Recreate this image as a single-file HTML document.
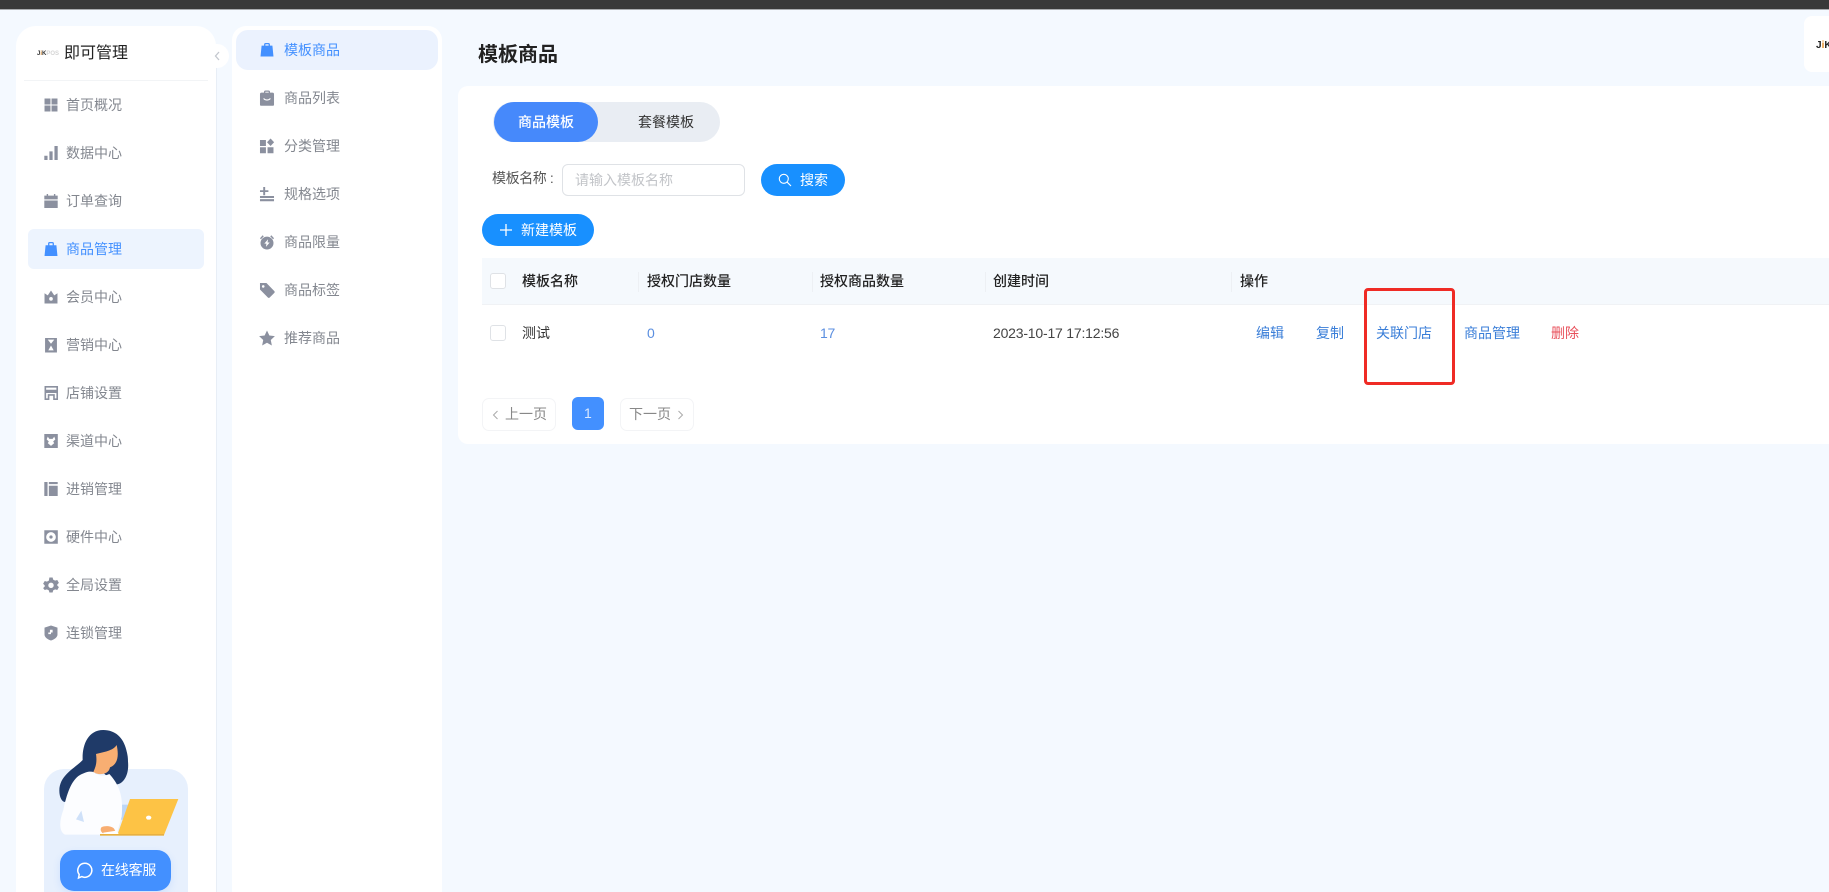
<!DOCTYPE html>
<html lang="zh-CN">
<head>
<meta charset="utf-8">
<title>模板商品</title>
<style>
*{box-sizing:border-box;margin:0;padding:0}
html,body{width:1829px;height:892px;overflow:hidden;background:#f4f9ff;font-family:"Liberation Sans","Noto Sans CJK SC",sans-serif;font-size:14px;color:#333}
.a{position:absolute}
.t{position:absolute;line-height:20px;height:20px;white-space:nowrap}
.m{color:#83878f}
.act{color:#4390ff}
.i{position:absolute;width:16px;height:16px;fill:#8b909f;transform:scale(1.08)}
.hd{font-weight:500;color:#222}
.sep{position:absolute;width:1px;height:20px;top:272px;background:#edf0f4}
.lk{color:#3a7ed8}
.btn{position:absolute;background:#1890ff;border-radius:17px}
.pg{position:absolute;top:398px;height:33px;width:74px;border:1px solid #f3f4f6;border-radius:7px;background:#fff}
.cb{position:absolute;width:16px;height:16px;border:1px solid #dfe2e6;border-radius:3px;background:#fff}
</style>
</head>
<body>
<!-- top bar -->
<div class="a" style="left:0;top:0;width:1829px;height:9px;background:#393939"></div>
<div class="a" style="left:0;top:9px;width:1829px;height:1px;background:#a9abae"></div>

<!-- primary sidebar -->
<div class="a" style="left:16px;top:26px;width:200px;height:866px;background:#fff;border-radius:20px 20px 0 0"></div>
<div class="a" style="left:216px;top:60px;width:1px;height:832px;background:#e8eef6"></div>
<div class="a" style="left:24px;top:80px;width:184px;height:1px;background:#f2f4f6"></div>
<div class="t" style="left:37px;top:47px;width:22px;font-size:6px;font-weight:700;line-height:14px;height:14px;color:#333">J<span style="color:#c9822e">i</span>K<span style="color:#d5d5d5">POS</span></div>
<div class="t" style="left:64px;top:43px;font-size:16px;line-height:22px;height:22px;color:#222">即可管理</div>
<div class="a" style="left:205px;top:44px;width:24px;height:24px;border-radius:50%;background:#fff"></div>
<svg class="a" style="left:212px;top:50px" width="10" height="12" viewBox="0 0 10 12"><path d="M7 2L3.500 6 7 10" fill="none" stroke="#c3c7ce" stroke-width="1.300"/></svg>

<div class="a" style="left:28px;top:229px;width:176px;height:40px;background:#edf4fe;border-radius:6px"></div>

<svg class="i" style="left:43px;top:97px" viewBox="0 0 16 16"><path d="M2 2h5.500v5.500H2zM8.500 2H14v5.500H8.500zM2 8.500h5.500V14H2zM8.500 8.500H14V14H8.500z"/></svg>
<div class="t m" style="left:66px;top:95px">首页概况</div>
<svg class="i" style="left:43px;top:145px" viewBox="0 0 16 16"><path d="M1.800 10.500h3v4h-3zM6.500 6.500h3v8h-3zM11.200 1.500h3v13h-3z"/></svg>
<div class="t m" style="left:66px;top:143px">数据中心</div>
<svg class="i" style="left:43px;top:193px" viewBox="0 0 16 16"><path d="M4 1.500h1.300V3h5.400V1.500H12V3h2.200v3.500H1.800V3H4zM1.800 7.500h12.400v7H1.800z"/></svg>
<div class="t m" style="left:66px;top:191px">订单查询</div>
<svg class="i" style="left:43px;top:241px;fill:#4390ff" viewBox="0 0 16 16"><path d="M5.300 4.500V3a1.500 1.500 0 011.500-1.500h2.400A1.500 1.500 0 0110.700 3v1.500H13l1 10H2L3 4.500zM6.500 4.500h3V3a.3.3 0 00-.3-.3H6.800a.3.3 0 00-.3.3z"/></svg>
<div class="t act" style="left:66px;top:239px">商品管理</div>
<svg class="i" style="left:43px;top:289px" viewBox="0 0 16 16"><path fill-rule="evenodd" d="M2 4.500l3 2L8 2l3 4.500 3-2V14H2zM8 8a1.700 1.700 0 100 3.400A1.700 1.700 0 008 8z"/></svg>
<div class="t m" style="left:66px;top:287px">会员中心</div>
<svg class="i" style="left:43px;top:337px" viewBox="0 0 16 16"><path fill-rule="evenodd" d="M2.500 1.500h11v13.500h-11zM5 3l3 3.800L11 3zM8 8.500L5.500 13h5z"/></svg>
<div class="t m" style="left:66px;top:335px">营销中心</div>
<svg class="i" style="left:43px;top:385px" viewBox="0 0 16 16"><path fill-rule="evenodd" d="M2 1.500h12.500v13H10v-4H6.500v4H2zM3.500 3v2h9.500V3zM3.500 8v5h1.500V9h6.500v4H13V8z"/></svg>
<div class="t m" style="left:66px;top:383px">店铺设置</div>
<svg class="i" style="left:43px;top:433px" viewBox="0 0 16 16"><path fill-rule="evenodd" d="M1.800 1.500h12.500v13H1.800zM5 4L4 6.500 6 8.500 5 10l3 2.500 3-2.500-1-1.500 2-2L11 4 9.500 6h-3z"/></svg>
<div class="t m" style="left:66px;top:431px">渠道中心</div>
<svg class="i" style="left:43px;top:481px" viewBox="0 0 16 16"><path d="M1.800 1.500h3v13h-3zM6 1.500h8.200v2H6zM6 5h8.200v9.500H6z"/></svg>
<div class="t m" style="left:66px;top:479px">进销管理</div>
<svg class="i" style="left:43px;top:529px" viewBox="0 0 16 16"><path fill-rule="evenodd" d="M1.800 1.700h12.500v12.600H1.800zM8 3.500a4.500 4.500 0 100 9 4.500 4.500 0 000-9zM8 6.500a1.500 1.500 0 110 3 1.500 1.500 0 010-3z"/></svg>
<div class="t m" style="left:66px;top:527px">硬件中心</div>
<svg class="i" style="left:43px;top:577px" viewBox="0 0 16 16"><path fill-rule="evenodd" d="M6.500 1h3l.5 2 1.800 1 2-.6 1.500 2.600-1.500 1.500v1l1.500 1.500-1.500 2.600-2-.6-1.800 1-.5 2h-3l-.5-2-1.800-1-2 .6L.7 10.900l1.500-1.500v-1L.7 6.900 2.200 4.300l2 .6L6 3.900zM8 5.800a2.500 2.500 0 100 5 2.500 2.500 0 000-5z"/></svg>
<div class="t m" style="left:66px;top:575px">全局设置</div>
<svg class="i" style="left:43px;top:625px" viewBox="0 0 16 16"><path fill-rule="evenodd" d="M8 1l6 2v6.500c0 2.500-3 4.500-6 5.500-3-1-6-3-6-5.500V3zM7 5v2.500H5.500V9H8V7.500h1.500V5z"/></svg>
<div class="t m" style="left:66px;top:623px">连锁管理</div>

<!-- illustration -->
<div class="a" style="left:44px;top:769px;width:144px;height:123px;background:#e7f0fd;border-radius:20px 20px 0 0"></div>
<svg class="a" style="left:0;top:660px" width="300" height="232" viewBox="0 0 900 696">
<path d="M310 210C262 210 246 258 248 300C225 325 178 345 178 392C178 412 186 426 195 426L300 330L350 373C370 372 388 345 384 305C384 290 382 282 379 270C370 232 345 210 310 210Z" fill="#1f3a68"/>
<path d="M288 282C312 276 340 272 350 255C356 282 356 312 330 322C326 346 292 346 280 336C286 322 292 310 288 282Z" fill="#f8ae72"/>
<rect x="345" y="434" width="40" height="45" fill="#bcd6f7"/>
<path d="M240 345C268 330 280 334 290 342C304 350 318 347 328 342C352 368 372 402 365 470L350 524L195 524C176 514 178 482 190 450C200 402 214 360 240 345Z" fill="#fcfdff"/>
<path d="M228 478L244 452L252 486Z" fill="#cfe1f9"/>
<path d="M390 417L535 417L492 525L352 525Z" fill="#fdc345"/>
<rect x="300" y="522" width="192" height="5" fill="#e8b040"/>
<path d="M304 502C315 496 335 498 342 506L350 520L310 520C302 516 300 508 304 502Z" fill="#f8ae72"/>
<path d="M310 518L350 512L356 522L310 522Z" fill="#fff"/>
<ellipse cx="446" cy="473" rx="8" ry="6" fill="#fff"/>
</svg>
<div class="a" style="left:60px;top:850px;width:111px;height:41px;background:#4390ff;border-radius:14px;box-shadow:0 3px 8px rgba(67,144,255,.15)"></div>
<svg class="a" style="left:75px;top:861px" width="19" height="19" viewBox="0 0 19 19"><path d="M9.800 2.300a7 7 0 11-3 13.300L3.500 17l.7-3.500a7 7 0 015.600-11.200z" fill="none" stroke="#fff" stroke-width="1.500"/></svg>
<div class="t" style="left:101px;top:860px;color:#fff;letter-spacing:-.2px">在线客服</div>

<!-- secondary sidebar -->
<div class="a" style="left:232px;top:26px;width:210px;height:866px;background:#fff;border-radius:14px 14px 0 0"></div>
<div class="a" style="left:236px;top:30px;width:202px;height:40px;background:#ebf2fe;border-radius:12px"></div>

<svg class="i" style="left:259px;top:42px;fill:#4390ff" viewBox="0 0 16 16"><path d="M5.300 4V3a1.500 1.500 0 011.500-1.500h2.400A1.500 1.500 0 0110.700 3v1H13l1 10H2L3 4zM6.500 4h3V3a.3.3 0 00-.3-.3H6.800a.3.3 0 00-.3.3z"/></svg>
<div class="t act" style="left:284px;top:40px">模板商品</div>
<svg class="i" style="left:259px;top:90px" viewBox="0 0 16 16"><path fill-rule="evenodd" d="M5.200 3V2.500A1.500 1.500 0 016.700 1h2.600a1.500 1.500 0 011.500 1.500V3H13a1.500 1.500 0 011.500 1.500V14a1.200 1.200 0 01-1.200 1.200H2.700A1.200 1.200 0 011.500 14V4.500A1.500 1.500 0 013 3zM6.400 3h3.200V2.500a.3.300 0 00-.3-.3H6.700a.3.300 0 00-.3.3zM4.500 8.500c.7 2.500 6.300 2.500 7 0l-1-.3c-.7 1.500-4.300 1.500-5 0z"/></svg>
<div class="t m" style="left:284px;top:88px">商品列表</div>
<svg class="i" style="left:259px;top:138px" viewBox="0 0 16 16"><path d="M1.500 2.500h5.500V8H1.500zM1.500 9.200h5.500v5.500H1.500zM8.500 9.200H14v5.500H8.500zM11.300 1l3.300 3.500-3.300 3.500L8 4.500z"/></svg>
<div class="t m" style="left:284px;top:136px">分类管理</div>
<svg class="i" style="left:259px;top:186px" viewBox="0 0 16 16"><path d="M4.500 1.500h1.800v3h3v1.700h-3v3H4.500v-3h-3V4.500h3zM1.500 9.800h13v1.900h-13zM1.500 12.800h13v1.900h-13z"/></svg>
<div class="t m" style="left:284px;top:184px">规格选项</div>
<svg class="i" style="left:259px;top:234px" viewBox="0 0 16 16"><path fill-rule="evenodd" d="M8 3a6 6 0 110 12A6 6 0 018 3zM9 5.500L5.500 9.500h2l-.5 3L10.500 8.500h-2zM1.500 4.500L4 1.800l1 1-2.600 2.600zM14.500 4.500L12 1.800l-1 1 2.600 2.600z"/></svg>
<div class="t m" style="left:284px;top:232px">商品限量</div>
<svg class="i" style="left:259px;top:282px" viewBox="0 0 16 16"><path fill-rule="evenodd" d="M1.500 1.500H7.500L14.800 9a1.200 1.200 0 010 1.700l-4.300 4.200a1.200 1.200 0 01-1.700 0L1.500 7.500zM4.500 3.500a1.200 1.200 0 100 2.400 1.200 1.200 0 000-2.400z"/></svg>
<div class="t m" style="left:284px;top:280px">商品标签</div>
<svg class="i" style="left:259px;top:330px" viewBox="0 0 16 16"><path d="M8 1l2.200 4.700 5.100.6-3.800 3.500 1 5.100L8 12.400l-4.500 2.500 1-5.100L.7 6.300l5.100-.6z"/></svg>
<div class="t m" style="left:284px;top:328px">推荐商品</div>

<!-- main -->
<div class="t" style="left:478px;top:41px;font-size:20px;line-height:28px;height:28px;font-weight:700;color:#222">模板商品</div>
<div class="a" style="left:458px;top:86px;width:1371px;height:358px;background:#fff;border-radius:10px 0 0 10px"></div>

<!-- right corner logo card -->
<div class="a" style="left:1804px;top:16px;width:25px;height:56px;background:#fff;border-radius:8px 0 0 8px"></div>
<div class="t" style="left:1816px;top:38px;font-size:10px;font-weight:700;line-height:16px;height:16px;color:#222;width:13px;overflow:hidden">J<span style="color:#e8912a">i</span>K</div>

<!-- tabs -->
<div class="a" style="left:493px;top:102px;width:227px;height:40px;background:#e9edf3;border-radius:20px"></div>
<div class="a" style="left:494px;top:102px;width:104px;height:40px;background:#4689fb;border-radius:20px"></div>
<div class="t" style="left:518px;top:112px;color:#fff;font-weight:500">商品模板</div>
<div class="t" style="left:638px;top:112px;color:#333">套餐模板</div>

<!-- search -->
<div class="t" style="left:492px;top:168px;color:#555;letter-spacing:-.4px">模板名称 :</div>
<div class="a" style="left:562px;top:164px;width:183px;height:32px;border:1px solid #dfe2e6;border-radius:6px;background:#fff"></div>
<div class="t" style="left:575px;top:170px;color:#c2c4c8">请输入模板名称</div>
<div class="btn" style="left:761px;top:164px;width:84px;height:32px;border-radius:16px"></div>
<svg class="a" style="left:778px;top:173px" width="14" height="14" viewBox="0 0 14 14"><circle cx="5.800" cy="5.800" r="4.500" fill="none" stroke="#fff" stroke-width="1.100"/><path d="M9.200 9.200L13 13" stroke="#fff" stroke-width="1.100"/></svg>
<div class="t" style="left:800px;top:170px;color:#fff">搜索</div>
<div class="btn" style="left:482px;top:214px;width:112px;height:32px;border-radius:16px"></div>
<svg class="a" style="left:499px;top:223px" width="14" height="14" viewBox="0 0 14 14"><path d="M7 1v12M1 7h12" stroke="#fff" stroke-width="1.300"/></svg>
<div class="t" style="left:521px;top:220px;color:#fff">新建模板</div>

<!-- table -->
<div class="a" style="left:482px;top:258px;width:1347px;height:47px;background:#f5f9fd;border-bottom:1px solid #f0f2f5"></div>
<div class="cb" style="left:490px;top:273px"></div>
<div class="t hd" style="left:522px;top:271px">模板名称</div>
<div class="sep" style="left:638px"></div>
<div class="t hd" style="left:647px;top:271px">授权门店数量</div>
<div class="sep" style="left:812px"></div>
<div class="t hd" style="left:820px;top:271px">授权商品数量</div>
<div class="sep" style="left:985px"></div>
<div class="t hd" style="left:993px;top:271px">创建时间</div>
<div class="sep" style="left:1231px"></div>
<div class="t hd" style="left:1240px;top:271px">操作</div>

<div class="cb" style="left:490px;top:325px"></div>
<div class="t" style="left:522px;top:323px;color:#333">测试</div>
<div class="t" style="left:647px;top:323px;color:#5b8fe0">0</div>
<div class="t" style="left:820px;top:323px;color:#5b8fe0;letter-spacing:-.3px">17</div>
<div class="t" style="left:993px;top:323px;color:#444;letter-spacing:-.2px">2023-10-17 17:12:56</div>
<div class="t lk" style="left:1256px;top:323px">编辑</div>
<div class="t lk" style="left:1316px;top:323px">复制</div>
<div class="t lk" style="left:1376px;top:323px">关联门店</div>
<div class="t lk" style="left:1464px;top:323px">商品管理</div>
<div class="t" style="left:1551px;top:323px;color:#e8505b">删除</div>

<!-- red annotation -->
<div class="a" style="left:1364px;top:288px;width:91px;height:97px;border:3px solid #ef2b25;border-radius:4px"></div>

<!-- pagination -->
<div class="pg" style="left:482px"></div>
<svg class="a" style="left:491px;top:410px" width="9" height="10" viewBox="0 0 9 10"><path d="M6.500 1L2.500 5l4 4" fill="none" stroke="#aaa" stroke-width="1"/></svg>
<div class="t" style="left:505px;top:404px;color:#888">上一页</div>
<div class="a" style="left:572px;top:397px;width:32px;height:33px;background:#4390ff;border-radius:6px"></div>
<div class="t" style="left:584px;top:403px;color:#dbe9ff">1</div>
<div class="pg" style="left:620px"></div>
<div class="t" style="left:629px;top:404px;color:#888">下一页</div>
<svg class="a" style="left:676px;top:410px" width="9" height="10" viewBox="0 0 9 10"><path d="M2.500 1l4 4-4 4" fill="none" stroke="#aaa" stroke-width="1"/></svg>
</body>
</html>
